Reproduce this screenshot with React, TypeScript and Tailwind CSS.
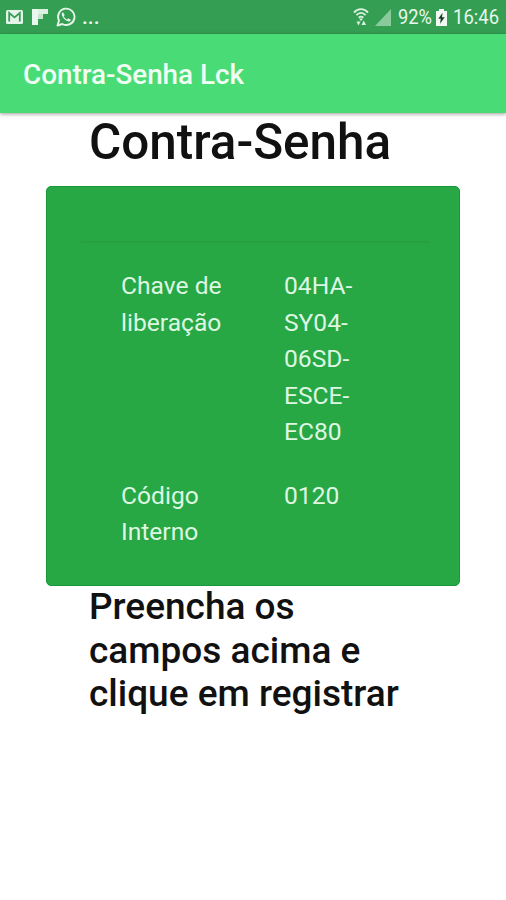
const fields = [
	{
		label: "Chave de liberação",
		value: "04HA-SY04-06SD-ESCE-EC80",
	},
	{
		label: "Código Interno",
		value: "0120",
	},
];

const MailIcon = () => (
	<svg className="w-[17px] h-[14px]" viewBox="0 0 17 14">
		<rect width="17" height="14" rx="1.5" fill="#e6f5e9" />
		<path
			d="M3.2 11.5V3l5.3 4.4L13.8 3v8.5"
			fill="none"
			stroke="#349f53"
			strokeWidth="1.8"
		/>
	</svg>
);

const FlipboardIcon = () => (
	<svg className="w-4 h-4" viewBox="0 0 16 16">
		<path d="M0 0h6v16H0z" fill="#e9f7ec" />
		<path d="M6 0h10v5H6z" fill="#dcf1e1" />
		<path d="M6 5h5v5H6z" fill="#c5e5cd" />
	</svg>
);

const WhatsappIcon = () => (
	<svg className="w-5 h-5" viewBox="0 0 20 20">
		<path
			d="M1.5 18.5l1.5-5A8.2 8.2 0 1 1 6.4 17z"
			fill="none"
			stroke="#e4f5e8"
			strokeWidth="1.9"
			strokeLinejoin="round"
		/>
		<path
			d="M7 5.2c-1.2.5-1.6 1.8-1 3.3 1 2.6 3 4.7 5.7 5.8 1.5.5 2.9-.2 3.1-1.6l-2.5-1.4-1.2 1.2c-1.5-.6-2.7-1.8-3.4-3.3l1-1.3z"
			fill="#e4f5e8"
		/>
	</svg>
);

const WifiIcon = () => (
	<svg className="w-4 h-[18px]" viewBox="0 0 16 18" fill="none">
		<path
			d="M1 4.6C4.8 0 11.2 0 15 4.6M3.4 7.2c2.800-3 6.400-3 9.200 0M5.700 9.700c1.400-1.300 3.200-1.300 4.600 0"
			stroke="#dcf1e1"
			strokeWidth="1.8"
		/>
		<path d="M6 10.5h4L8 13z" fill="#dcf1e1" />
		<path d="M3.500 13.500h4L5.500 17.500zM8.500 17h4.500l-2.200-4.500z" fill="#dcf1e1" />
	</svg>
);

const SignalIcon = () => (
	<svg className="w-4 h-[17px]" viewBox="0 0 16 17">
		<path d="M16 0v17H0z" fill="#8bcb9b" />
	</svg>
);

const BatteryIcon = () => (
	<svg className="w-[11px] h-[17px]" viewBox="0 0 11 17">
		<path d="M3 0h5v2h3v15H0V2h3z" fill="#f0faf2" />
		<path d="M6.5 3.8L2.3 9.7h2.5l-.8 5L8.7 8.2H6z" fill="#173d22" />
	</svg>
);

const StatusBar = () => (
	<div className="flex h-[34px] items-center justify-between bg-[#349f53] pl-[6px] pr-[7px] text-[#e9f7ec]">
		<div className="flex items-center">
			<MailIcon />
			<div className="ml-[9px]">
				<FlipboardIcon />
			</div>
			<div className="ml-2">
				<WhatsappIcon />
			</div>
			<span className="ml-[6px] text-[21px] font-medium leading-[34px]">
				...
			</span>
		</div>
		<div className="flex items-center">
			<WifiIcon />
			<div className="ml-[6px]">
				<SignalIcon />
			</div>
			<span className="ml-[7px] w-[34px] pt-px text-[21px] leading-[33px]">
				<span className="inline-block origin-left scale-x-[0.87]">
					92%
				</span>
			</span>
			<div className="ml-1">
				<BatteryIcon />
			</div>
			<span className="ml-[6px] w-[46px] pt-px text-[21px] leading-[33px]">
				<span className="inline-block origin-left scale-x-[0.88]">
					16:46
				</span>
			</span>
		</div>
	</div>
);

const App = () => {
	return (
		<div
			lang="pt-BR"
			className="h-[900px] w-[506px] overflow-hidden bg-white font-['Roboto',sans-serif]"
		>
			<StatusBar />
			<header className="flex h-[79px] items-center bg-[#49dc76] pl-[23px] shadow-[0_1px_4px_rgba(0,0,0,0.4)]">
				<span className="pt-[3px] text-[27.8px] font-medium text-[#effff3]">
					Contra-Senha Lck
				</span>
			</header>

			<main className="px-[46px]">
				<h1 className="h-[73px] pl-[43px] text-[49.4px] font-medium leading-[59px] text-[#111]">
					Contra-Senha
				</h1>

				<section className="h-[400px] w-[414px] rounded-[5px] border border-[#17993a] bg-[#28a745] pl-[34px] pr-[29px] pt-[54px] text-[24.6px] leading-[36.5px] text-[#ddf7e2]">
					<hr className="border-t-2 border-[#27a042]" />
					{fields.map((field) => (
						<div
							key={field.label}
							className="mb-[27px] flex pl-10 first-of-type:mt-[25px]"
						>
							<div className="w-[163px] pr-10">{field.label}</div>
							<div className="w-[90px]">{field.value}</div>
						</div>
					))}
				</section>

				<h2 className="-mt-px w-[390px] pl-[43px] pr-4 text-[37px] font-medium leading-[43.7px] text-[#111]">
					Preencha os campos acima e clique em registrar
				</h2>
			</main>
		</div>
	);
};

export default App;
